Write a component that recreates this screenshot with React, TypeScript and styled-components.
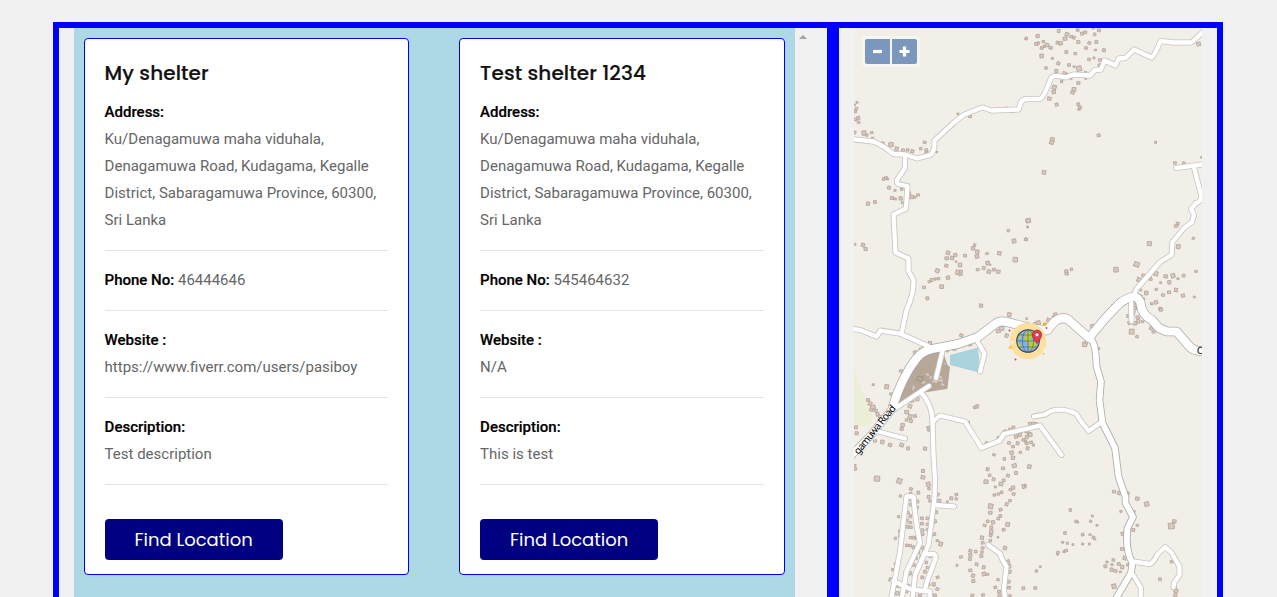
import React from 'react';
import styled, { createGlobalStyle } from 'styled-components';

const GlobalStyle = createGlobalStyle`
  * { box-sizing: border-box; }
  body {
    margin: 0;
    height: 597px;
    overflow: hidden;
    background: #f1f1f1;
    font-family: Roboto, "Liberation Sans", sans-serif;
    font-size: 15px;
    line-height: 27px;
    color: #666;
  }
`;

const Page = styled.main`
  display: flex;
  width: 1170px;
  height: 597px;
  margin: 0 0 0 52.6px;
  padding-top: 22px;
`;

const Panel = styled.section<{ $width: number }>`
  width: ${(p) => p.$width}px;
  height: 600px;
  flex: none;
  display: flex;
  padding: 0 15px;
  border: 6px solid #00f;
`;

const ShelterList = styled.div`
  flex: 1;
  display: flex;
  align-items: flex-start;
  gap: 50px;
  padding: 10px;
  background: lightblue;
`;

const ScrollTrack = styled.div`
  width: 17px;
  flex: none;
  display: flex;
  justify-content: center;
  padding-top: 7px;
  background: #f1f1f1;
`;

const ScrollArrow = styled.span`
  width: 0;
  height: 0;
  border: 4px solid transparent;
  border-top: 0;
  border-bottom-color: #a3a3a3;
`;

const Card = styled.article`
  flex: 1;
  min-width: 0;
  height: 537px;
  padding: 20px;
  border: 1px solid #00f;
  border-radius: 4px;
  background: #fff;
`;

const CardTitle = styled.h4`
  margin: 0 0 12px;
  font: 500 20px/28px Poppins, Inter, sans-serif;
  letter-spacing: 0.1px;
  -webkit-text-stroke: 0.2px #111;
  color: #111;
  white-space: nowrap;
`;

const Field = styled.p`
  margin: 0;
  padding-bottom: 16px;
  margin-bottom: 16px;
  border-bottom: 1px solid #e3e3e3;
`;

const Label = styled.strong<{ $block?: boolean }>`
  display: ${(p) => (p.$block ? 'block' : 'inline')};
  font-weight: 500;
  -webkit-text-stroke: 0.2px #000;
  color: #000;
`;

const FindButton = styled.button`
  display: block;
  width: 178px;
  height: 41px;
  margin-top: 34px;
  padding: 0;
  border: 0;
  border-radius: 4px;
  background: #000080;
  color: #fff;
  font: 400 18px/41px Poppins, Inter, sans-serif;
`;

const MapFrame = styled.div`
  position: relative;
  flex: 1;
  height: 588px;
  background: #f2efe9;
`;

const MapSvg = styled.svg`
  display: block;
  width: 348px;
  height: 588px;
`;

const ZoomControl = styled.div`
  position: absolute;
  top: 8px;
  left: 8px;
  display: flex;
  gap: 2px;
  padding: 3px;
  border-radius: 4px;
  background: rgba(255, 255, 255, 0.4);
`;

const ZoomButton = styled.button<{ $side: 'left' | 'right' }>`
  display: flex;
  align-items: center;
  justify-content: center;
  width: 25px;
  height: 25px;
  padding: 0;
  border: 0;
  border-radius: ${(p) => (p.$side === 'left' ? '2px 0 0 2px' : '0 2px 2px 0')};
  background: #7b98bc;
`;

interface Shelter {
  name: string;
  phone: string;
  website: string;
  description: string;
}

const ADDRESS =
  'Ku/Denagamuwa maha viduhala, Denagamuwa Road, Kudagama, Kegalle District, Sabaragamuwa Province, 60300, Sri Lanka';

const shelters: Shelter[] = [
  { name: 'My shelter', phone: '46444646', website: 'https://www.fiverr.com/users/pasiboy', description: 'Test description' },
  { name: 'Test shelter 1234', phone: '545464632', website: 'N/A', description: 'This is test' },
];

const ShelterCard = ({ shelter }: { shelter: Shelter }) => (
  <Card>
    <CardTitle>{shelter.name}</CardTitle>
    <Field><Label $block>Address:</Label>{ADDRESS}</Field>
    <Field><Label>Phone No:</Label> {shelter.phone}</Field>
    <Field><Label $block>Website :</Label>{shelter.website}</Field>
    <Field><Label $block>Description:</Label>{shelter.description}</Field>
    <FindButton>Find Location</FindButton>
  </Card>
);

// Footpaths and village lanes.
const lanes = [
  'M850 139L873.5 141.5Q884 146 893.5 154L905 154.5L917.5 158.5L930 155Q935 152 934.5 140.5L955 121.5L963.5 115L978 109L983 107.5L991.5 110.5L1018.5 109.5L1021 102Q1023 99 1027 99L1040 99Q1044 97 1051 78Q1054 74 1065.5 77.5L1073.5 74.5L1090 75.5L1095 70L1101 69.5L1104.5 60.5L1115.5 65.5L1118.5 58.5L1125.5 58L1134 49.5L1151.5 57.5Q1155 55 1160.5 41L1173.5 42.5L1191.5 42.5L1206 29',
  'M905 155L905 168L897 180Q896 184 900 184.5L907.5 186L906 208.5L893.5 214.5L895.5 252.5L908.5 258.5L908.5 271L913.5 280Q914 294 906.5 310L901.5 334',
  'M850 328.5L860 330L876.5 336.5L880.5 330.5L900 333.5L928 346',
  'M1176 168L1206 164',
  'M1194 167.5L1201.5 196.5Q1201 202 1196 203L1191 209L1194 215L1192 222L1184 228L1172.5 242L1171.5 255L1160 262L1136.5 289L1133 297',
  'M1131 302L1131.5 321',
  'M1132 573L1141 588L1140.5 600',
  'M1133 561.5L1150 564Q1154 562 1157 555L1165 547L1171 552L1179.5 566.5L1179.5 575L1174 583L1173.5 587',
  'M1034 416.5L1045 414.5Q1058 405 1076.5 414L1080 420L1088.5 431L1101 422.5',
  'M921.5 393Q932 405 932.5 420L933.5 455L935 480L934.5 498L928.5 545L915 575L912.5 600',
  'M932.5 422L940 415.5L965 421.5L981.5 448L1000 440.5L1003.5 434L1030 428L1040 425.5L1061.5 455',
  'M943 349L936 378',
  'M976 339L984.5 353.5L980 371.5',
  'M929 386L908 400L893 410',
  'M878 431.5L905 438.5',
  'M891 600L900 551.5L906.5 496.5L913.5 496.5Q915 520 920 543L906.5 571.5L901.5 600',
  'M934 505L954 506.5',
  'M927 554L934 554Q937 556 935 560L926.5 583L925 590',
  'M893.5 581L911.5 589.5L930 591.5L929.5 600',
  'M988 545L1000 553.5L1002 559L1006.5 566.5L1004 588.5L1005 600',
];

const southRoad =
  'M1091.5 340Q1096 345 1096.5 366.5L1101 381.5L1099.5 400L1102.5 423L1115 448L1118.5 476.5L1125.5 497L1125.5 503L1133 517L1127.5 528Q1125 550 1132.5 563L1131 573L1115 600';
const mainRoad =
  'M893 406Q902 377 916 359Q922 351 932 349L958 344L978 337L995 324Q1000 320 1007 322L1030 328L1047 330.5L1055 321Q1065 315 1071 322L1089 338L1106.5 317L1120 303Q1138 290 1141 305Q1142 315 1152 320L1159 328L1167 331.5L1176.5 331.5L1189 346Q1194 352 1206 351';
const lowerRoad = 'M848 459L872 434L893 408';

// Building footprints grouped by survey block: "x,y,size" in thirds of a map pixel.
const blocks = [
  { x: 850, y: 20, spots: '529,55,7 21,247,6 14,254,6 19,266,8 16,275,8 15,298,10 25,294,9 26,307,8 13,337,10 42,339,13 50,345,8 65,338,8 68,355,7 98,370,9 123,374,14 140,386,10 159,391,9 173,390,9 187,394,9 212,386,8 224,367,9 229,391,9 228,399,7 260,396,6 324,282,6 360,289,9 488,275,7 470,265,7' },
  { x: 1025, y: 20, spots: '3,56,7 38,48,10 34,72,11 40,69,7 55,65,8 50,84,9 58,79,7 66,75,11 77,83,10 50,108,11 63,144,8 82,115,7 101,33,9 126,43,11 120,56,12 97,68,8 107,70,11 139,50,9 147,53,8 160,66,10 158,30,9 171,41,9 181,37,9 193,69,9 209,43,8 222,31,9 205,24,7 214,66,9 183,84,9 211,90,7 237,91,9 124,96,9 151,101,9 100,130,9 132,135,9 147,140,6 162,146,15 181,157,7 192,118,9 207,114,6 225,120,9 223,135,8 94,153,10 118,160,10 126,164,9 110,184,7 138,176,6 160,189,10 88,202,12 86,216,11 73,236,11 95,254,9 147,208,12 143,217,11 160,253,9 165,262,9 162,268,7 82,359,12 80,367,12 221,346,10 392,367,6 521,72,12 450,429,9 476,430,8 530,412,6 182,175,7' },
  { x: 850, y: 165, spots: '101,42,8 108,39,9 113,42,7 117,68,9 135,76,7 155,73,8 177,85,10 126,99,10 136,102,7 152,100,10 158,113,8 176,100,7 187,96,10 195,97,6 204,90,9 54,116,10 75,111,9 14,238,8 39,240,10 47,252,10 534,167,12 533,186,5 475,197,8 528,223,9 492,228,12 448,265,11 411,266,8 496,284,14 294,263,11 290,280,11 306,279,10 316,270,10 345,272,10 374,240,7 369,250,11 382,260,11 381,274,11 318,290,5 289,302,10 330,300,11 324,322,14 331,328,10 333,320,9 262,317,12 383,314,9 401,309,9 413,294,11 420,299,6 417,320,11 432,314,9 445,320,11 294,338,10 275,365,12 222,367,9 232,400,9 393,422,10 238,350,8 245,345,9 255,342,7 265,341,9' },
  { x: 1025, y: 165, spots: '57,22,11 10,167,13 8,186,5 3,223,8 124,319,10 125,326,10 139,313,7 373,236,13 335,298,16 273,314,14 458,176,9 453,183,10 460,245,12 505,220,7 513,319,8 393,326,12 377,342,9 355,331,10 342,344,12 347,375,7 422,334,11 444,332,12 476,332,9 459,341,7 433,352,10 407,353,6 394,373,8 364,384,11 414,390,9 432,382,10 453,375,10 474,392,10 508,396,7 348,393,6 356,402,7 380,416,8 393,412,10 406,432,10 264,423,9 327,422,12 330,430,9' },
  { x: 850, y: 310, spots: '478,14,11 445,63,12 455,55,14 470,77,10 480,45,9 240,99,10 195,128,10 212,118,9 334,76,10 360,102,11 338,106,9 313,117,10 292,121,9 153,183,9 70,224,7 110,230,12 123,252,8 54,270,10 60,281,11 69,292,14 77,302,10 83,313,10 90,320,9 64,299,10 18,352,9 20,370,10 186,272,11 202,267,11 180,289,11 170,306,12 180,320,12 195,318,9 170,330,9 183,333,9 158,345,11 155,357,10 235,354,9 237,360,8 155,405,12 174,415,9 225,416,10 75,393,9 97,396,11 120,405,10 375,292,10 382,289,9 355,337,7 466,364,10 480,360,10 490,352,9 502,360,9 498,380,10 510,375,10 520,390,9 536,372,9 446,384,10 436,397,9 410,400,9 477,399,9 489,410,9 503,400,9 485,428,11 511,427,8 533,415,9 530,400,9 285,160,8' },
  { x: 1025, y: 310, spots: '5,26,5 40,38,12 30,41,9 70,30,10 91,14,11 85,22,8 201,48,9 179,103,14 184,98,9 221,116,6 310,18,10 314,38,11 320,65,15 336,80,8 330,40,12 340,34,10 338,22,10 386,65,10 378,55,9 408,-1,10 353,35,7 15,342,9 25,341,9 5,365,10 16,374,11 5,382,10 18,397,9 25,405,7 32,340,7 2,395,8 325,8,10' },
  { x: 850, y: 455, spots: '14,32,8 16,42,8 81,71,17 148,78,15 219,48,10 219,67,12 235,88,12 237,101,8 183,102,9 205,113,9 151,123,7 182,115,8 236,126,9 263,118,9 267,138,12 304,130,9 319,119,8 319,132,8 292,141,6 240,138,8 180,134,9 202,140,9 182,149,9 201,157,9 259,172,9 146,185,7 173,173,9 181,184,9 170,196,9 181,203,9 172,215,9 183,217,8 216,190,10 232,190,8 216,206,9 233,208,9 255,199,9 217,226,10 233,224,9 150,229,9 218,238,8 252,238,10 136,250,7 150,243,9 182,248,9 192,248,8 200,250,8 262,257,8 272,267,11 170,271,8 180,272,9 190,277,8 216,278,10 205,292,9 222,290,10 214,305,9 198,310,9 209,322,9 145,310,9 137,327,9 229,322,7 240,305,7 129,344,9 122,374,10 192,330,9 201,340,9 180,355,9 191,362,9 233,338,9 225,350,9 217,367,9 263,367,9 251,388,10 262,402,9 236,389,9 145,392,10 130,402,10 142,415,12 170,408,9 175,392,9 210,421,10 193,420,9 255,421,9 432,-1,8 463,12,8 489,8,11 493,32,13 498,54,9 474,62,9 459,40,10 413,43,9 419,61,8 408,80,13 431,73,9 461,76,9 453,87,12 522,94,11 489,98,11 481,104,8 455,112,8 445,117,7 433,120,8 436,96,6 491,117,9 480,137,9 422,154,14 452,164,9 421,173,11 470,148,9 451,183,9 445,191,9 429,202,10 413,199,9 404,211,9 424,217,9 473,208,12 461,224,9 424,230,11 422,241,9 444,247,6 396,248,10 398,263,9 398,279,9 465,279,10 421,257,8 396,291,8 394,303,9 377,290,9 361,287,9 361,299,10 360,312,9 333,306,9 321,331,6 380,328,9 361,346,10 401,337,9 402,357,11 413,358,8 369,362,10 370,378,10 444,374,8 474,320,10 477,334,12 478,350,11 476,380,9 477,398,9 436,397,9 447,410,9 449,422,10 399,420,9 367,422,9 520,400,9 480,422,8' },
  { x: 1025, y: 455, spots: '13,35,11 1,92,6 267,110,10 282,114,9 308,115,9 337,131,11 365,147,13 288,169,7 326,170,9 136,165,8 153,199,8 158,202,6 197,199,7 202,183,6 216,211,7 120,234,8 173,239,8 195,239,7 205,247,7 209,252,7 113,262,7 127,265,6 144,269,6 173,267,7 193,267,6 117,290,7 123,287,9 99,293,8 97,298,6 337,211,8 325,225,9 293,236,10 291,282,10 299,309,10 439,213,18 448,199,11 440,320,8 405,373,9 246,321,7 241,334,9 265,315,8 261,329,7 260,344,10 272,348,9 281,327,10 292,336,10 286,351,6 309,330,9 34,348,7 46,335,6 31,399,9 267,394,13 450,398,9 453,408,12 451,421,9' },
];

const Buildings = () => (
  <g fill="#d5cac2" stroke="#bba99e" strokeWidth="2.8">
    {blocks.map((block, b) => (
      <g key={b} transform={`translate(${block.x} ${block.y}) scale(0.3333)`}>
        {block.spots.split(' ').map((spot, i) => {
          const [x, y, size] = spot.split(',').map(Number);
          const w = size - 0.5;
          const h = size - (i % 3);
          return (
            <rect key={i} x={-w / 2} y={-h / 2} width={w} height={h}
              transform={`translate(${x} ${y}) rotate(${[10, -16, 3, 20, -6][i % 5]})`} />
          );
        })}
      </g>
    ))}
  </g>
);

const Marker = () => (
  <g>
    <circle cx="1028" cy="341" r="18.3" fill="#fddf9f" />
    <circle cx="1028" cy="341" r="11.3" fill="#7fb5ea" stroke="#3d4657" strokeWidth="1.1" />
    <path d="M1027 331.5L1032 331L1033 336L1030 340L1036 341L1036 346L1031 350L1028 346L1029 343L1024 340L1025 335ZM1019 335L1021 334L1021 338L1019 340ZM1018 343L1021 345L1022 349L1018 346Z" fill="#bdcb39" />
    <g fill="none" stroke="#3d4657" strokeWidth=".5">
      <path d="M1028 330V352M1017 341H1039M1019 335H1037M1019 347H1037" />
      <ellipse cx="1028" cy="341" rx="5.6" ry="11" />
    </g>
    <path d="M1037 343.5Q1032.3 338 1032.3 334.8A4.7 4.7 0 0 1 1041.7 334.8Q1041.7 338 1037 343.5Z" fill="#e93a4c" stroke="#8c3040" strokeWidth=".7" />
    <circle cx="1037" cy="334.8" r="1.9" fill="#fff" stroke="#8c3040" strokeWidth=".5" />
    <circle cx="1010.5" cy="347.5" r="1.8" fill="#fbc944" />
    <circle cx="1012.5" cy="342.5" r="1.1" fill="#fff" />
    <path d="M1043 322.5h3.4v2.6h-3.4z" fill="#f0b71a" />
    <circle cx="1043.5" cy="354" r=".9" fill="#fbc02d" />
    <g fill="#e93a4c">
      <circle cx="1009.5" cy="330.5" r="1" />
      <circle cx="1015.5" cy="359.5" r="1" />
      <circle cx="1046.5" cy="328" r="1" />
    </g>
  </g>
);

const ShelterMap = () => (
  <MapFrame>
    <MapSvg viewBox="854 28 348 588">
      <path d="M854 370L873 417L869 426H854Z" fill="#ecefd5" />
      <path d="M919 357L942 350L947 365L949.5 367L947 388.5L922 392.5L896 407L905 385Z" fill="#b7a799" stroke="#a99585" strokeWidth=".6" />
      <path d="M950 355L978 347.5L980.5 373L950 365Z" fill="#aad3df" />
      <Buildings />
      <path d="M918 376L923 377L922 382L916.5 380Z" fill="#b7a799" stroke="#9c8b7e" strokeWidth=".8" />
      <path d="M926 374l3 1M932 381l5 1M938 380l5 1M941 384l3 1M922 383l3-1M914 386l-1 4M931 376l-1 3M937 375l5 3" stroke="#d6cbc2" strokeWidth="2" />
      <g fill="none" strokeLinejoin="round" strokeLinecap="round">
        <g stroke="#c6c4c1" strokeWidth="5.9">{lanes.map((d) => <path key={d} d={d} />)}</g>
        <path d={southRoad} stroke="#a9a9a9" strokeWidth="7.4" />
        <path d={lowerRoad} stroke="#a9a9a9" strokeWidth="8.2" />
        <path d={mainRoad} stroke="#a9a9a9" strokeWidth="9.6" />
        <g stroke="#fff" strokeWidth="4.3">{lanes.map((d) => <path key={d} d={d} />)}</g>
        <path d={southRoad} stroke="#fff" strokeWidth="5.8" />
        <path d={lowerRoad} stroke="#fff" strokeWidth="6.8" />
        <path d={mainRoad} stroke="#fff" strokeWidth="8.2" />
      </g>
      <g fontFamily='"Noto Sans", sans-serif' fontSize="10" fill="#000">
        <text transform="translate(858.5 455) rotate(-51)" textLength="60">gamuwa Road</text>
        <text transform="translate(1196.5 353.5) rotate(6)">C</text>
      </g>
      <Marker />
    </MapSvg>
    <ZoomControl>
      <ZoomButton $side="left" aria-label="Zoom out">
        <svg width="11" height="11"><path d="M1 5.5H10" stroke="#fff" strokeWidth="3.2" /></svg>
      </ZoomButton>
      <ZoomButton $side="right" aria-label="Zoom in">
        <svg width="11" height="11"><path d="M.5 5.5H10.5M5.5 .5V10.5" stroke="#fff" strokeWidth="3.2" /></svg>
      </ZoomButton>
    </ZoomControl>
  </MapFrame>
);

export default function App() {
  return (
    <>
      <GlobalStyle />
      <Page>
        <Panel $width={780}>
          <ShelterList>
            {shelters.map((shelter) => <ShelterCard key={shelter.name} shelter={shelter} />)}
          </ShelterList>
          <ScrollTrack><ScrollArrow /></ScrollTrack>
        </Panel>
        <Panel $width={390}>
          <ShelterMap />
        </Panel>
      </Page>
    </>
  );
}
